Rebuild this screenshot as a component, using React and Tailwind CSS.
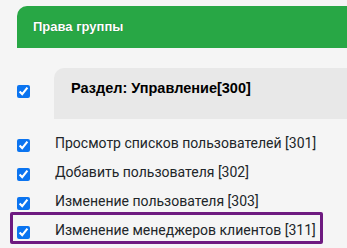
import React from "react";

const items = [
  "Просмотр списков пользователей [301]",
  "Добавить пользователя [302]",
  "Изменение пользователя [303]",
];

function Cb() {
  return (
    <input
      type="checkbox"
      defaultChecked
      className="block m-0 w-[13px] h-[13px] shrink-0 accent-[#0b74f0]"
    />
  );
}

export default function App() {
  return (
    <div className="w-[347px] h-[248px] overflow-hidden bg-[#f5f5f5] pl-[17px] pt-[6px]">
      <div className="h-[42px] bg-[#28a745] rounded-tl-[10px] flex items-center pl-[16px] mr-[-20px]">
        <span
          className="text-white font-bold text-[13px] [text-shadow:0_0_1px_rgba(0,0,0,0.4)]"
          style={{ fontFamily: '"Liberation Sans", Arial, sans-serif' }}
        >
          Права группы
        </span>
      </div>

      <div className="mt-[20px] flex items-start">
        <div className="flex pt-[17px]">
          <Cb />
        </div>
        <div className="ml-[24px] flex-1 mr-[-20px] h-[51px] bg-[#e8e8e8] rounded-tl-[10px] pl-[17px] pt-[10px]">
          <div
            className="text-black font-bold text-[14.5px] leading-[20px]"
            style={{ fontFamily: '"Liberation Sans", Arial, sans-serif' }}
          >
            Раздел: Управление[300]
          </div>
        </div>
      </div>

      <div
        className="mt-[12px] flex flex-col text-[#212529] text-[14px] leading-[20px]"
        style={{ fontFamily: 'Roboto, "Liberation Sans", sans-serif' }}
      >
        {items.map((t) => (
          <div key={t} className="h-[29px] flex items-center">
            <Cb />
            <span className="ml-[25px] -mt-[5px]">{t}</span>
          </div>
        ))}
        <div className="-mt-[6px] -ml-[7px] w-[313px] h-[32px] border-[3px] border-[#6e1a80] rounded-[2px] pl-[4px] pt-[8px] flex items-center">
          <Cb />
          <span className="ml-[25px] -mt-[5px]">Изменение менеджеров клиентов [311]</span>
        </div>
      </div>
    </div>
  );
}
